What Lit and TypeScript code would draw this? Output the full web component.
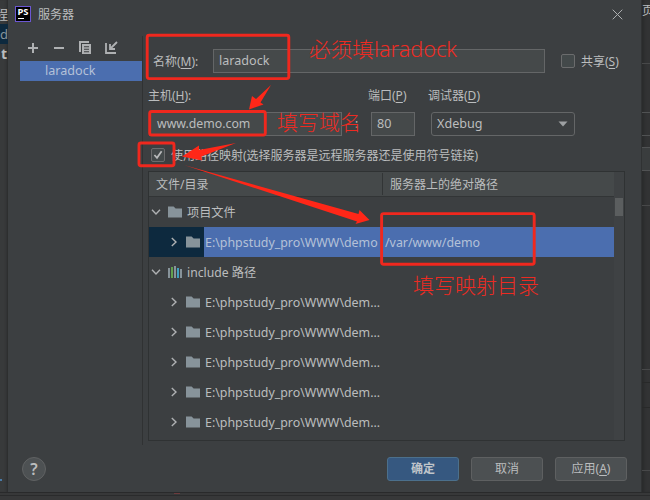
import { LitElement, html, svg, css } from "lit";
import { customElement, property } from "lit/decorators.js";

const baseText = css`
  * { box-sizing: border-box; }
  svg { display: block; flex: none; }
  u { text-decoration: underline; text-underline-offset: 2px; text-decoration-thickness: 1px; }
`;

const folder = html`<svg width="14" height="12" viewBox="0 0 14 12"><path d="M0 0.5H5.6L7.6 2.6H14V11.5H0Z" fill="#87939a"/></svg>`;
const library = html`<svg width="14" height="12" viewBox="0 0 14 12" shape-rendering="crispEdges">
  <path d="M0 2h2v10H0z" fill="#87939a"/><path d="M3 1h2v11H3z" fill="#62a04f"/><path d="M6 0h2v12H6z" fill="#87939a"/>
  <path d="M9 2h2v10H9z" fill="#3f9fc0"/><path d="M12 3h2v9h-2z" fill="#87939a"/></svg>`;
const chevronRight = html`<svg width="8" height="10" viewBox="0 0 8 10"><path d="M1.8 1L6 5L1.8 9" fill="none" stroke="#afb1b3" stroke-width="1.4"/></svg>`;
const chevronDown = html`<svg width="10" height="8" viewBox="0 0 10 8"><path d="M1 1.8L5 6L9 1.8" fill="none" stroke="#afb1b3" stroke-width="1.4"/></svg>`;

@customElement("check-box")
class CheckBox extends LitElement {
  @property({ type: Boolean }) checked = false;
  static styles = css`
    :host { display: block; width: 14px; height: 14px; flex: none; }
    .box { box-sizing: border-box; width: 14px; height: 14px; border: 1px solid #6b6c6d; border-radius: 2px; background: #43494a; }
    svg { display: block; }
  `;
  render() {
    return html`<div class="box">${this.checked
      ? html`<svg width="12" height="12" viewBox="0 0 12 12"><path d="M2.4 6L5 8.8L9.6 2.2" fill="none" stroke="#b9bbbc" stroke-width="1.7"/></svg>`
      : ""}</div>`;
  }
}

@customElement("server-list")
class ServerList extends LitElement {
  static styles = [baseText, css`
    :host { display: block; width: 134px; padding: 12px 0 0 12px; }
    .tools { display: flex; align-items: center; height: 15px; padding-left: 7px; gap: 10px; }
    .item { margin-top: 6px; height: 20px; line-height: 20px; padding-left: 25px; background: #4b6eaf; color: #b4c1d8; font-size: 12.6px; }
  `];
  render() {
    return html`
      <div class="tools">
        <svg width="16" height="16" viewBox="0 0 16 16"><path d="M5 3h2v4h4v2H7v4H5V9H1V7h4z" fill="#afb1b3"/></svg>
        <svg width="16" height="16" viewBox="0 0 16 16"><path d="M1 7h10v2H1z" fill="#afb1b3"/></svg>
        <svg width="16" height="16" viewBox="0 0 16 16"><path d="M0 1h10v2H2v9H0z" fill="#afb1b3"/><path d="M3 4h9v10H3zM5 6.2v1h5v-1zM5 8.7v1h5v-1zM5 11.2v1h5v-1z" fill="#afb1b3" fill-rule="evenodd"/></svg>
        <svg width="16" height="16" viewBox="0 0 16 16"><path d="M1 3v10h10M12 2L6 8M5 4v5h5" fill="none" stroke="#afb1b3" stroke-width="1.8"/></svg>
      </div>
      <div class="item">laradock</div>`;
  }
}

@customElement("mapping-table")
class MappingTable extends LitElement {
  static styles = [baseText, css`
    :host { display: flex; width: 477px; height: 270px; border: 1px solid #2f3233; font-size: 12.4px; }
    .grid { width: 465px; }
    .head { display: flex; height: 25px; background: #45494a; border-bottom: 1px solid #323536; line-height: 25px; font-size: 12px; }
    .h1 { width: 234px; padding-left: 7px; border-right: 1px solid #323536; margin: 1px 0; line-height: 23px; }
    .h2 { padding-left: 7px; }
    .row { display: flex; align-items: center; height: 30px; }
    .group { padding: 0 0 1px 2px; }
    .group svg + svg { margin: 0 5px 0 7px; }
    .entry { padding-left: 21px; }
    .entry svg + svg { margin-left: 8px; }
    .group .cap { font-size: 12.2px; }
    .path { height: 30px; line-height: 31px; width: 180px; margin-left: 5px; white-space: pre; }
    .selected { background: linear-gradient(to right, #0d293e 55px, #4b6eaf 55px); color: #b4c1d8; }
    .scroll { width: 10px; background: #3f4244; padding: 26px 1px 0 1px; }
    .thumb { height: 18px; background: #5b5e5f; }
  `];
  render() {
    return html`
      <div class="grid">
        <div class="head"><div class="h1">文件/目录</div><div class="h2">服务器上的绝对路径</div></div>
        <div class="row group">${chevronDown}${folder}<span class="cap">项目文件</span></div>
        <div class="row entry selected">${chevronRight}${folder}<span class="path">E:\\phpstudy_pro\\WWW\\demo</span><span>/var/www/demo</span></div>
        <div class="row group">${chevronDown}${library}<span class="cap">include 路径</span></div>
        ${[1, 2, 3, 4, 5].map(() => html`<div class="row entry">${chevronRight}${folder}<span class="path">E:\\phpstudy_pro\\WWW\\dem...</span></div>`)}
      </div>
      <div class="scroll"><div class="thumb"></div></div>`;
  }
}

@customElement("mark-layer")
class MarkLayer extends LitElement {
  static styles = css`
    :host { position: absolute; inset: 0; }
    svg { position: absolute; inset: 0; }
    text { fill: #ed2b22; font-size: 21px; font-weight: 300; }
  `;
  render() {
    const boxes = [[147.2, 35.2, 141.6, 43.4], [149.7, 111.5, 115.6, 23.5], [139, 143, 35, 22.7], [381.6, 213.6, 152.6, 50.6]];
    return html`<svg width="650" height="500" viewBox="0 0 650 500">
      ${boxes.map(([x, y, w, h]) => svg`<rect x=${x} y=${y} width=${w} height=${h} rx="2" fill="none" stroke="#f0281e" stroke-width="2.9"/>`)}
      <g fill="#ff2718">
        <path d="M271 85L256 99L252 96L249 109.5L263.5 104.5L260.5 102.5Z"/>
        <path d="M236 143L199 150L199 145.5L182 156.5L202 160.5L201.5 156.5Z"/>
        <path d="M184 165L357 221.5L355.5 224L369.5 220L359.5 210L358.5 214Z"/>
      </g>
      <text x="309" y="57" textLength="148" lengthAdjust="spacingAndGlyphs">必须填laradock</text>
      <text x="277" y="130" textLength="84">填写域名</text>
      <text x="413" y="293" textLength="126">填写映射目录</text>
    </svg>`;
  }
}

@customElement("app-root")
class AppRoot extends LitElement {
  static styles = [baseText, css`
    :host { display: block; position: relative; width: 650px; height: 500px; overflow: hidden; background: #38393a;
      color: #bbbdbe; font: 12px "Noto Sans", "Noto Sans CJK SC", sans-serif; }
    .stage { display: flex; height: 492px; }
    .left, .right { width: 8px; flex: none; overflow: hidden; background: #383a3b; }
    .left { white-space: nowrap; font-size: 13px; box-shadow: inset -3px 0 3px -2px #292a2b; }
    .left div { height: 20px; line-height: 20px; direction: rtl; }
    .left .first { margin-top: 4px; }
    .left .sel { background: #0d293e; height: 20px; color: #87939a; }
    .left .bold { font-weight: bold; font-size: 14px; padding-right: 1px; }
    .left .dot { width: 2px; height: 2px; margin-top: 415px; background: #4a7ba8; }
    .right { background: #323334; box-shadow: inset 3px 0 3px -1px #292a2b; }
    .right .cap { height: 64px; line-height: 22px; border-bottom: 1px solid #474849; white-space: nowrap; }
    .right .r1 { height: 49px; border-bottom: 1px solid #505253; }
    .right .r2 { height: 23px; border-bottom: 1px solid #505253; }
    .right .r3 { height: 12px; border-bottom: 1px solid #505253; }
    .right .r4 { height: 23px; background: #3a3d3e; border-bottom: 1px solid #505253; }
    .right .r5 { height: 35px; border-bottom: 1px solid #474849; }
    .right .r6 { height: 164px; border-bottom: 1px solid #474849; }
    .right .r7 { height: 13px; border-bottom: 1px solid #282929; }
    .right .r8 { height: 25px; border-bottom: 1px solid #282929; }
    .right .r9 { height: 63px; border-bottom: 1px solid #474849; }
    .bottom { height: 8px; background: #373839; border-top: 1px solid #292a2b; }
    .line { height: 3px; border-bottom: 1px solid #2a2b2c; padding-left: 174px; }
    .blip { width: 6px; height: 1px; background: #6d3b3d; }
    .dialog { width: 634px; background: #3c3f41; border: solid #303233; border-width: 0 1px 0 0; display: flex; flex-direction: column; }
    .title { height: 28px; display: flex; align-items: center; padding: 0 18px 0 7px; }
    .title .name { flex: 1; padding-left: 7px; font-size: 12px; }
    .body { height: 417px; display: flex; }
    .rule { width: 1px; background: #303233; margin-top: 8px; }
    .form { flex: 1; padding: 21px 0 0 5px; }
    .line1 { display: flex; align-items: center; height: 24px; }
    .line1 .lab { width: 65px; padding-left: 5px; }
    .field { height: 24px; line-height: 22px; border: 1px solid #646667; background: #45494a; padding-left: 5px; font-size: 12.6px; }
    .f1 { width: 332px; }
    .line1 check-box { margin: 0 6px 0 16px; }
    .cols { display: flex; height: 49px; margin-top: 14px; }
    .cols .lab { height: 25px; line-height: 18px; }
    .c1 { width: 195px; }
    .c1 .field { width: 193px; margin-left: 1px; padding-left: 7px; font-size: 12.3px; }
    .colon { width: 28px; padding: 28px 0 0 12px; }
    .c2 { width: 60px; }
    .c2 .field { width: 44px; }
    .c2 .lab, .c3 .lab { margin-left: -3px; }
    .select { width: 144px; border-radius: 3px; background: #3c3f41; display: flex; align-items: center; justify-content: space-between; padding-right: 6px; }
    .map { display: flex; align-items: center; height: 20px; margin: 9px 0 6px; padding-left: 3px; }
    .map check-box { margin-right: 6px; }
    .footer { flex: 1; display: flex; align-items: flex-start; gap: 12px; padding: 12px 14px 0; }
    .help { width: 24px; height: 24px; border-radius: 50%; background: #4d5153; border: 1px solid #606263; text-align: center; line-height: 22px; font-size: 16px; font-weight: 600; margin-right: auto; }
    .btn { width: 72px; height: 24px; border: 1px solid #5e6061; border-radius: 3px; background: #4c5052; text-align: center; line-height: 22px; }
    .ok { background: #365880; border-color: #4c708c; font-weight: bold; color: #c0c5ca; }
  `];
  render() {
    return html`
      <div class="stage">
        <div class="left"><div class="first">程</div><div class="sel">d</div><div class="bold">t</div><div class="dot"></div></div>
        <div class="dialog">
          <div class="title">
            <svg width="16" height="16" viewBox="0 0 16 16"><rect x=".5" y=".5" width="15" height="15" fill="#000" stroke="#6b57d2"/>
              <text x="2.5" y="9" font-size="8.5" font-weight="700" fill="#fff" textLength="11" lengthAdjust="spacingAndGlyphs">PS</text><path d="M3 12h6v1H3z" fill="#fff"/></svg>
            <span class="name">服务器</span>
            <svg width="11" height="11" viewBox="0 0 11 11"><path d="M.7 .7L10.3 10.3M10.3 .7L.7 10.3" stroke="#aeb0b1" fill="none"/></svg>
          </div>
          <div class="body">
            <server-list></server-list><div class="rule"></div>
            <div class="form">
              <div class="line1"><span class="lab">名称(<u>M</u>):</span><div class="field f1">laradock</div><check-box></check-box><span>共享(<u>S</u>)</span></div>
              <div class="cols">
                <div class="c1"><div class="lab">主机(<u>H</u>):</div><div class="field">www.demo.com</div></div>
                <div class="colon">:</div>
                <div class="c2"><div class="lab">端口(<u>P</u>)</div><div class="field">80</div></div>
                <div class="c3"><div class="lab">调试器(<u>D</u>)</div><div class="field select">Xdebug<svg width="10" height="6" viewBox="0 0 10 6"><path d="M.5 .5h9L5 5.5z" fill="#9da0a2"/></svg></div></div>
              </div>
              <div class="map"><check-box checked></check-box><span>使用路径映射(选择服务器是远程服务器还是使用符号链接)</span></div>
              <mapping-table></mapping-table>
            </div>
          </div>
          <div class="footer"><div class="help">?</div><div class="btn ok">确定</div><div class="btn">取消</div><div class="btn">应用(<u>A</u>)</div></div>
        </div>
        <div class="right"><div class="cap">页</div>${[1, 2, 3, 4, 5, 6, 7, 8, 9].map((n) => html`<div class="r${n}"></div>`)}</div>
      </div>
      <div class="bottom"><div class="line"><div class="blip"></div></div></div>
      <mark-layer></mark-layer>`;
  }
}
